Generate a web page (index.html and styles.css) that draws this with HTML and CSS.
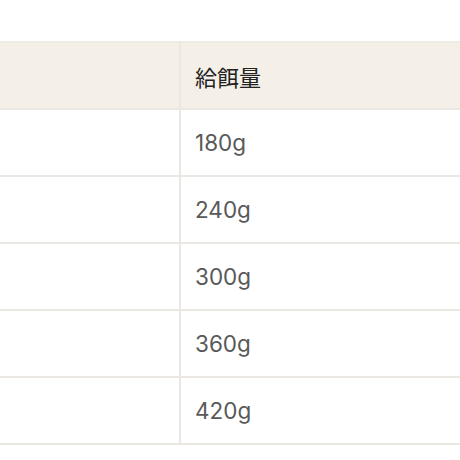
FILE: index.html
```html
<!DOCTYPE html>
<html lang="ja">
<head>
<meta charset="utf-8">
<link rel="stylesheet" href="styles.css">
</head>
<body>
<div class="wrap">
<table class="feed">
  <thead>
    <tr><th class="c1"></th><th class="c2">給餌量</th></tr>
  </thead>
  <tbody>
    <tr><td class="c1"></td><td class="c2">180g</td></tr>
    <tr><td class="c1"></td><td class="c2">240g</td></tr>
    <tr><td class="c1"></td><td class="c2">300g</td></tr>
    <tr><td class="c1"></td><td class="c2">360g</td></tr>
    <tr><td class="c1"></td><td class="c2">420g</td></tr>
  </tbody>
</table>
</div>
</body>
</html>
```
FILE: styles.css
```css
html, body {
  margin: 0;
  padding: 0;
  background: #ffffff;
  overflow: hidden;
}
.wrap {
  padding-top: 41px;
  width: 460px;
  overflow: hidden;
}
.feed {
  border-collapse: collapse;
  width: 520px;
  font-family: Inter, "Noto Sans CJK JP", sans-serif;
  table-layout: fixed;
}
.feed th, .feed td {
  height: 65px;
  padding: 0 0 0 14px;
  text-align: left;
  vertical-align: middle;
  border-top: 2px solid #ebe8e4;
  border-bottom: 2px solid #ebe8e4;
}
.feed .c1 {
  width: 165px;
  border-right: 2px solid #ebe8e4;
}
.feed th {
  background: #f4f0e8;
  font-weight: 400;
  font-size: 22px;
  color: #222;
  border-top-color: #efebe5;
}
.feed td {
  font-size: 22.5px;
  color: #595959;
}
```
